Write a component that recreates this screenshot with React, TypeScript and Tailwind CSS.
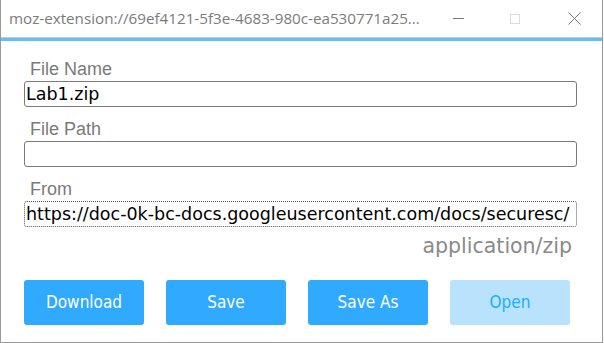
import React from 'react';

const labelCls = "block text-[18px] leading-none text-[#7a7a7a] font-['Liberation_Sans',Arial,sans-serif] pl-[6px]";

const Field = ({ label, value, focused }: { label: string; value?: string; focused?: boolean }) => (
  <div className="flex flex-col">
    <span className={labelCls}>{label}</span>
    <div
      className={
        'mt-[3px] h-[26px] w-[553px] overflow-hidden whitespace-nowrap rounded-[3px] px-[1px] flex items-center ' +
        (focused ? 'border border-dotted border-[#555]' : 'border border-[#7a7a7a]')
      }
    >
      <span className="text-[17.5px] text-black font-['DejaVu_Sans',sans-serif]">{value}</span>
    </div>
  </div>
);

const Button = ({ children, disabled }: { children: React.ReactNode; disabled?: boolean }) => (
  <button
    className={
      "h-[45px] w-[120px] rounded-[3px] text-[17px] font-['DejaVu_Sans_Condensed','DejaVu_Sans',sans-serif] " +
      (disabled ? 'bg-[#b9e3fd] text-[#1aaeff]' : 'bg-[#30aaff] text-white')
    }
  >
    {children}
  </button>
);

export default function App() {
  return (
    <div className="h-[343px] w-[604px] bg-white">
      <div className="h-[343px] w-[603px] border-x border-b border-[#9a9a9a] bg-white flex flex-col">
        <div className="h-[38px] flex items-center border-b border-[#c8c8c8] shrink-0">
          <span className="pl-[8px] w-[444px] shrink-0 truncate text-[15.2px] text-[#7b7b7b] font-['Open_Sans','Noto_Sans',sans-serif]">
            moz-extension://69ef4121-5f3e-4683-980c-ea530771a25...
          </span>
          <span className="block h-px w-[11px] bg-[#777] ml-[8px]" />
          <span className="ml-[46px] block h-[10px] w-[10px] border border-[#dcdcdc]" />
          <svg className="ml-[48px]" width="13" height="13" viewBox="0 0 13 13">
            <path d="M0.5 0.5L12.5 12.5M12.5 0.5L0.5 12.5" stroke="#777" strokeWidth="1" />
          </svg>
        </div>
        <div className="h-[3px] bg-[#5dc0fa] shrink-0" />
        <div className="flex flex-col pl-[23px] pt-[19px]">
          <div className="flex flex-col gap-[13px]">
            <Field label="File Name" value="Lab1.zip" />
            <Field label="File Path" />
            <Field label="From" value="https://doc-0k-bc-docs.googleusercontent.com/docs/securesc/" focused />
          </div>
          <div className="w-[548px] text-right mt-[7px] text-[20.5px] leading-[24px] text-[#8a8a8a] font-['DejaVu_Sans',sans-serif]">
            application/zip
          </div>
          <div className="mt-[22px] flex gap-[22px]">
            <Button>Download</Button>
            <Button>Save</Button>
            <Button>Save As</Button>
            <Button disabled>Open</Button>
          </div>
        </div>
      </div>
    </div>
  );
}
